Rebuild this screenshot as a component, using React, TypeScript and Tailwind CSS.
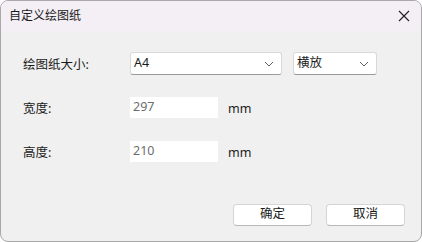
import React from "react";

const FONT = { fontFamily: '"Noto Sans", "Noto Sans CJK SC", sans-serif' };

function Chevron() {
  return (
    <svg width="10" height="6" viewBox="0 0 10 6" className="shrink-0">
      <path d="M1 1 L5 5 L9 1" fill="none" stroke="#5f5f5f" strokeWidth="1" />
    </svg>
  );
}

function Combo({ value, width }: { value: string; width: string }) {
  return (
    <div
      className={`flex h-[23px] ${width} items-center justify-between rounded-[3px] border border-[#d9d9d9] border-b-[#9a9a9a] bg-white pl-[3px] pr-[7px] text-[12.5px] text-[#1a1a1a]`}
    >
      <span>{value}</span>
      <Chevron />
    </div>
  );
}

function Field({ value }: { value: string }) {
  return (
    <div className="flex h-[21px] w-[88px] items-center bg-white pl-[3px] text-[12.5px] text-[#6d6d6d]">
      {value}
    </div>
  );
}

function Button({ label }: { label: string }) {
  return (
    <button
      type="button"
      className="flex h-[22px] w-[79px] items-center justify-center rounded-[4px] border border-[#d5d5d5] border-b-[#b8b8b8] bg-white text-[12.5px] text-[#1a1a1a]"
    >
      {label}
    </button>
  );
}

export default function App() {
  return (
    <div style={FONT} className="h-[242px] w-[422px] overflow-hidden rounded-[8px] border border-[#a8a8a8] bg-[#f0f0f0]">
      <div className="flex h-[30px] items-center justify-between bg-[#f4eef5] pl-[8px] pr-[11px]">
        <span className="text-[12px] text-[#1a1a1a]">自定义绘图纸</span>
        <svg width="12" height="12" viewBox="0 0 12 12">
          <path d="M1 1 L11 11 M11 1 L1 11" stroke="#1f1f1f" strokeWidth="1.1" />
        </svg>
      </div>

      <div className="pl-[22px] pt-[21px]">
        <div className="flex items-center">
          <span className="mt-[4px] w-[107px] text-[12.5px] text-[#1a1a1a]">绘图纸大小:</span>
          <Combo value="A4" width="w-[152px]" />
          <div className="ml-[11px]">
            <Combo value="横放" width="w-[84px]" />
          </div>
        </div>

        <div className="mt-[21px] flex items-center">
          <span className="mt-[4px] w-[107px] text-[12.5px] text-[#1a1a1a]">宽度:</span>
          <Field value="297" />
          <span className="ml-[10px] mt-[4px] text-[12.5px] text-[#1a1a1a]">mm</span>
        </div>

        <div className="mt-[21px] flex items-center">
          <span className="mt-[4px] w-[107px] text-[12.5px] text-[#1a1a1a]">高度:</span>
          <Field value="210" />
          <span className="ml-[10px] mt-[4px] text-[12.5px] text-[#1a1a1a]">mm</span>
        </div>
      </div>

      <div className="mt-[41px] flex justify-end gap-[14px] pr-[16px]">
        <Button label="确定" />
        <Button label="取消" />
      </div>
    </div>
  );
}
